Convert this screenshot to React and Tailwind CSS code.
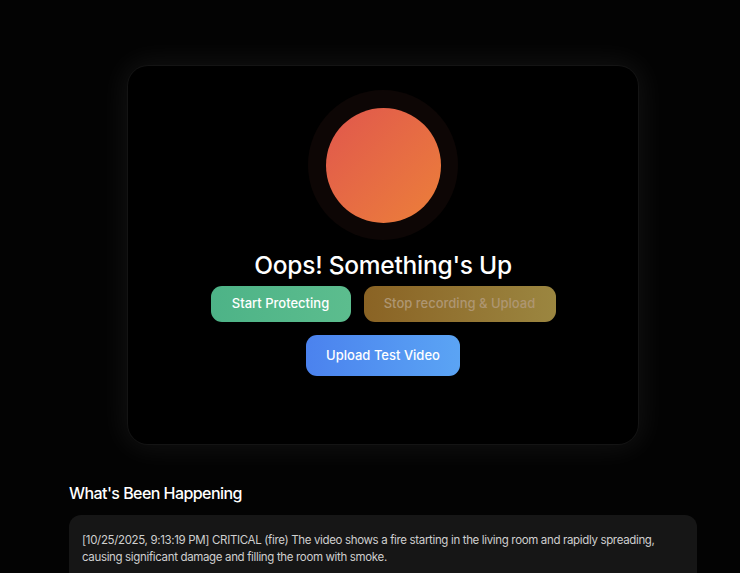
export default function App() {
  return (
    <div
      className="min-h-[573px] bg-[#030303] pb-10 pl-[69px] pt-[66px] text-white"
      style={{ fontFamily: "Inter, 'Noto Sans', sans-serif" }}
    >
      <div className="w-[628px]">
        <div className="mx-auto flex h-[378px] w-[510px] flex-col items-center rounded-[20px] bg-black pt-6 shadow-[0_0_28px_6px_rgba(255,255,255,0.06)] ring-1 ring-white/[0.04]">
          <div className="flex h-[150px] w-[150px] items-center justify-center rounded-full bg-[#0d0605]">
            <div className="h-[115px] w-[115px] rounded-full bg-gradient-to-br from-[#e0564c] to-[#ec7f38]" />
          </div>
          <h1 className="mt-[9px] text-[24.5px] font-medium leading-8 tracking-[-0.01em]">
            Oops! Something's Up
          </h1>
          <div className="mt-[5px] flex gap-[13px]">
            <button className="h-9 w-[140px] rounded-[11px] bg-gradient-to-r from-[#4db387] to-[#5cbd8e] text-[13px] font-medium text-white">
              Start Protecting
            </button>
            <button className="h-9 w-[192px] rounded-[11px] bg-gradient-to-r from-[#8a6324] to-[#9b8640] text-[13px] font-medium text-[#ae9672]">
              Stop recording &amp; Upload
            </button>
          </div>
          <button className="mt-[13px] h-[41px] w-[154px] rounded-[11px] bg-gradient-to-r from-[#4b82ee] to-[#5ba4f4] text-[13px] font-medium text-white">
            Upload Test Video
          </button>
        </div>

        <h2 className="mt-[37px] text-[16px] font-medium leading-6 tracking-[-0.035em]">What's Been Happening</h2>
        <div className="mt-[10px] rounded-xl bg-[#161616] px-[13px] pb-5 pt-[17px] text-[11.5px] leading-[17px] tracking-[-0.03em] text-[#cfcfcf]">
          [10/25/2025, 9:13:19 PM] CRITICAL (fire) The video shows a fire starting in the living room and rapidly spreading,
          causing significant damage and filling the room with smoke.
        </div>
      </div>
    </div>
  );
}
